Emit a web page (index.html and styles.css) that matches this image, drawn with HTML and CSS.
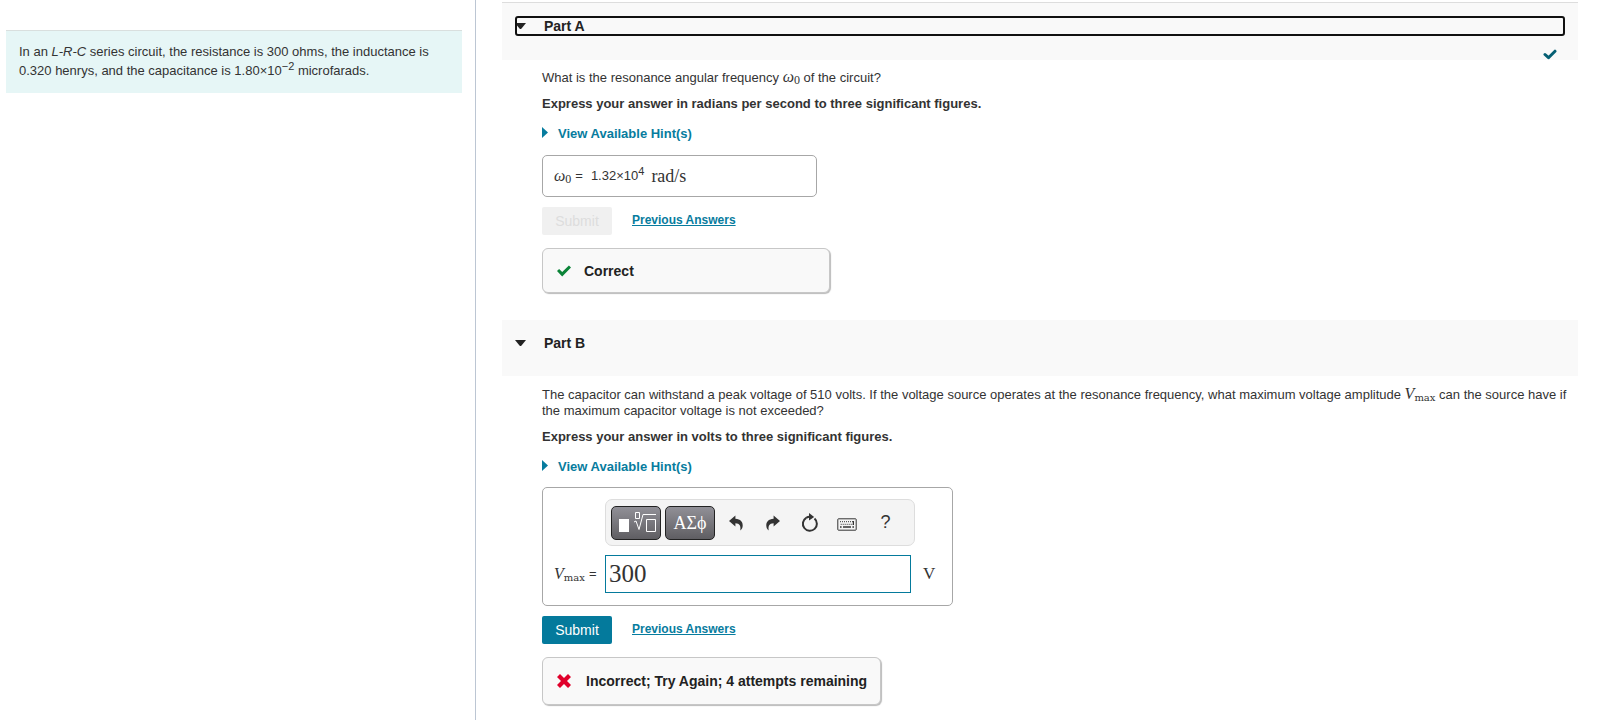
FILE: index.html
```html
<!DOCTYPE html>
<html lang="en">
<head>
<meta charset="utf-8">
<title>L-R-C series circuit</title>
<link rel="stylesheet" href="styles.css">
</head>
<body>
<div class="page">
  <aside class="intro">
    <p class="problem">In an <i>L-R-C</i> series circuit, the resistance is 300 ohms, the inductance is 0.320 henrys, and the capacitance is 1.80×10<sup>−2</sup> microfarads.</p>
  </aside>
  <main class="parts">
    <section class="part">
      <header class="part-header part-header-first">
        <h2><button class="part-toggle part-toggle-focused" type="button" aria-expanded="true">
          <svg class="caret" viewBox="0 0 11 6" aria-hidden="true"><path d="M0 0H11L6.5 5.4Q5.5 6.4 4.5 5.4Z"/></svg>Part A</button></h2>
        <svg class="done" viewBox="0 0 14 11" role="img" aria-label="Completed"><path d="M2 5.5L5.5 8.7L12 2.2"/></svg>
      </header>
      <div class="part-body">
        <p>What is the resonance angular frequency <span class="math"><i>ω</i><sub>0</sub></span> of the circuit?</p>
        <p class="instruction">Express your answer in radians per second to three significant figures.</p>
        <a class="hints" href="#hints-a"><svg viewBox="0 0 6 11" aria-hidden="true"><path d="M0 0L6 5.5L0 11Z"/></svg>View Available Hint(s)</a>
        <div class="answer"><span class="math"><i>ω</i><sub>0</sub></span><span>=</span><span class="value">1.32×10<sup>4</sup></span><span class="unit">rad/s</span></div>
        <div class="actions">
          <button class="submit" type="button" disabled>Submit</button>
          <a class="previous" href="#previous-a">Previous Answers</a>
        </div>
        <div class="feedback feedback-correct">
          <svg class="mark" viewBox="0 0 14 12" aria-hidden="true"><path d="M0 6.1L2.1 3.9L5.2 7L11.9 .5L14 2.6L5.2 11.4Z"/></svg>Correct
        </div>
      </div>
    </section>
    <section class="part">
      <header class="part-header">
        <h2><button class="part-toggle" type="button" aria-expanded="true">
          <svg class="caret" viewBox="0 0 11 6" aria-hidden="true"><path d="M0 0H11L6.5 5.4Q5.5 6.4 4.5 5.4Z"/></svg>Part B</button></h2>
      </header>
      <div class="part-body">
        <p>The capacitor can withstand a peak voltage of 510 volts. If the voltage source operates at the resonance frequency, what maximum voltage amplitude <span class="math"><i>V</i><sub class="word">max</sub></span> can the source have if the maximum capacitor voltage is not exceeded?</p>
        <p class="instruction">Express your answer in volts to three significant figures.</p>
        <a class="hints" href="#hints-b"><svg viewBox="0 0 6 11" aria-hidden="true"><path d="M0 0L6 5.5L0 11Z"/></svg>View Available Hint(s)</a>
        <div class="editor">
          <div class="toolbar" role="toolbar" aria-label="Equation tools">
            <button class="palette" type="button" aria-label="Templates">
              <svg viewBox="0 0 40 24" aria-hidden="true"><path class="solid" d="M3 8H13V21H3Z"/><path d="M19.5 1.5H23.5V7.5H19.5ZM18 11L20 10L23 18.5L27 3.5H40M30.5 8.5H39.5V20.5H30.5Z"/></svg>
            </button>
            <button class="palette" type="button">ΑΣϕ</button>
            <button class="tool" type="button" aria-label="Undo"><svg viewBox="0 0 14 16" aria-hidden="true"><path d="M0 6L6.4 .6V3.7C11.5 3.9 14 7 13.7 10.7C13.6 12.9 12.8 14.3 11.3 15.4C11.9 11.2 10.9 8.4 6.4 8.3V11.5Z"/></svg></button>
            <button class="tool" type="button" aria-label="Redo"><svg viewBox="0 0 14 16" aria-hidden="true"><path d="M14 6L7.6 .6V3.7C2.5 3.9 0 7 .3 10.7C.4 12.9 1.2 14.3 2.7 15.4C2.1 11.2 3.1 8.4 7.6 8.3V11.5Z"/></svg></button>
            <button class="tool" type="button" aria-label="Reset"><svg class="wide" viewBox="0 0 18 20" aria-hidden="true"><path class="ring" d="M5.2 4.8A7 7 0 1 0 13.5 5.5"/><path d="M8 0L13.2 4L8 7.6Z"/><path class="ring" d="M5.2 4.8Q7 3.6 9 3.7"/></svg></button>
            <button class="tool" type="button" aria-label="Keyboard"><svg class="keys" viewBox="0 0 20 13" aria-hidden="true"><path class="frame" d="M1.5 .8H18.5Q19.2 .8 19.2 1.5V11.5Q19.2 12.2 18.5 12.2H1.5Q.8 12.2 .8 11.5V1.5Q.8 .8 1.5 .8Z"/><path class="row" d="M3 3.7H17M3.7 6.3H17"/><path d="M3 8.2H4.6V9.8H3ZM6 8.2H14V9.8H6ZM15.4 8.2H17V9.8H15.4ZM15.8 3V7H17V3Z"/></svg></button>
            <button class="tool help" type="button" aria-label="Help">?</button>
          </div>
          <label class="editor-label" for="vmax"><span class="math"><i>V</i><sub class="word">max</sub></span><span>=</span></label>
          <input class="entry" id="vmax" type="text" value="300">
          <span class="editor-unit">V</span>
        </div>
        <div class="actions">
          <button class="submit" type="button">Submit</button>
          <a class="previous" href="#previous-b">Previous Answers</a>
        </div>
        <div class="feedback">
          <svg class="mark" viewBox="0 0 14 14" aria-hidden="true"><path d="M3 0L7 4L11 0L14 3L10 7L14 11L11 14L7 10L3 14L0 11L4 7L0 3Z"/></svg>Incorrect; Try Again; 4 attempts remaining
        </div>
      </div>
    </section>
  </main>
</div>
</body>
</html>
```
FILE: styles.css
```css
* { box-sizing: border-box; }

body {
  margin: 0;
  background: #fff;
  color: #333;
  font: 13px/16px "Liberation Sans", Arial, sans-serif;
}

button { font-family: inherit; cursor: pointer; }
p, h2 { margin: 0; }
sup, sub { line-height: 0; }
sup { font-size: 11px; vertical-align: 5px; }

.page {
  display: grid;
  grid-template-columns: 476px minmax(0, 1fr);
  min-height: 100vh;
}

.intro {
  padding: 30px 13px 0 6px;
  border-right: 1px solid #bcc6d3;
}

.problem {
  padding: 11px 13px 13px;
  border-top: 1px solid #d9dfde;
  background: #e6f6f6;
  line-height: 19px;
}

.parts {
  padding: 2px 22px 12px 26px;
}

.part + .part { margin-top: 27px; }

.part-header {
  height: 56px;
  padding: 13px 13px 0;
  background: #f9f9f9;
}

.part-header-first {
  height: 58px;
  border-top: 1px solid #ddd;
}

.part-toggle {
  display: flex;
  align-items: center;
  width: 100%;
  height: 20px;
  padding: 0;
  border: 0;
  border-radius: 3px;
  background: none;
  color: #222;
  font-size: 14px;
  font-weight: bold;
}

.part-toggle-focused { outline: 2px solid #111; outline-offset: -2px; }

.caret { width: 11px; height: 6px; margin: 0 18px 0 0; fill: #222; }

.done {
  display: block;
  width: 14px;
  height: 11px;
  margin: 13px 8px 0 auto;
  fill: none;
  stroke: #055f73;
  stroke-width: 3;
  stroke-linecap: round;
  stroke-linejoin: round;
}

.part-body {
  display: flex;
  flex-direction: column;
  align-items: flex-start;
  padding: 9px 0 0 40px;
}

.part + .part .part-body { padding-top: 10px; }

.math { font-family: "Liberation Serif", "Times New Roman", serif; font-size: 16px; }
.math sub { font-size: 12px; vertical-align: -2px; }
.math .word { font-family: "DejaVu Serif", serif; font-size: 10px; }

.instruction { margin-top: 10px; font-weight: bold; }

.hints {
  display: flex;
  align-items: baseline;
  gap: 10px;
  margin-top: 14px;
  color: #077c9e;
  font-weight: bold;
  text-decoration: none;
}

.hints svg { width: 6px; height: 11px; fill: currentColor; }

.answer {
  display: flex;
  align-items: center;
  gap: 4px;
  width: 275px;
  height: 42px;
  margin-top: 13px;
  padding: 0 11px;
  border: 1px solid #a7a7a7;
  border-radius: 5px;
}

.value { margin-left: 4px; }
.unit { margin-left: 3px; font: 18px/16px "Liberation Serif", serif; }

.actions {
  display: flex;
  align-items: center;
  gap: 20px;
  margin-top: 10px;
}

.submit {
  width: 70px;
  height: 28px;
  padding: 0;
  border: 0;
  border-radius: 2px;
  background: #047a9c;
  color: #fff;
  font-size: 14px;
}

.submit:disabled { background: #f0f0f0; color: #ddd; }

.previous {
  padding-bottom: 3px;
  color: #077c9e;
  font-size: 12px;
  font-weight: bold;
}

.feedback {
  display: flex;
  align-items: center;
  gap: 15px;
  height: 48px;
  margin-top: 13px;
  padding: 0 13px 0 14px;
  border: 1px solid #c7c7c7;
  border-radius: 6px;
  background: #f9f9f9;
  box-shadow: 1px 1px 1px #bbb;
  color: #222;
  font-size: 14px;
  font-weight: bold;
}

.feedback-correct { width: 288px; height: 45px; gap: 13px; }
.mark { width: 14px; height: 14px; fill: #e0002b; }
.feedback-correct .mark { height: 12px; fill: #0b8438; }

.editor {
  display: grid;
  grid-template-columns: 51px 306px auto;
  row-gap: 9px;
  align-items: center;
  width: 411px;
  margin-top: 12px;
  padding: 11px 12px 12px 11px;
  border: 1px solid #a7a7a7;
  border-radius: 5px;
}

.toolbar {
  grid-column: 2 / 4;
  display: flex;
  align-items: center;
  gap: 4px;
  width: 310px;
  height: 47px;
  padding: 0 5px;
  border: 1px solid #ddd;
  border-radius: 7px;
  background: #f4f4f4;
}

.palette {
  display: grid;
  place-items: center;
  width: 50px;
  height: 34px;
  padding: 0;
  border: 1px solid #222;
  border-radius: 5px;
  background: linear-gradient(#919097, #5f5e62);
  color: #fff;
  font: 18px/20px "Liberation Serif", serif;
}

.palette svg { width: 40px; height: 24px; fill: none; stroke: #fff; }
.palette .solid { fill: #fff; stroke: none; }

.tool {
  display: grid;
  place-items: center;
  width: 33px;
  height: 34px;
  padding: 0;
  border: 0;
  background: none;
  color: #333;
}

.tool svg { width: 14px; height: 16px; fill: #333; }
.tool .wide { width: 18px; height: 20px; }
.tool .keys { width: 20px; height: 13px; margin-top: 4px; }
.tool .ring { fill: none; stroke: #333; stroke-width: 2; }
.tool .frame { fill: none; stroke: #333; stroke-width: 1; }
.tool .row { fill: none; stroke: #333; stroke-width: 1; stroke-dasharray: 1 1; }
.tool.help { width: 37px; font-size: 18px; }

.editor-label { display: flex; align-items: center; gap: 4px; }

.entry {
  width: 100%;
  height: 38px;
  padding: 0 3px;
  border: 1px solid #047a9c;
  border-radius: 0;
  background: #fff;
  color: #333;
  font: 25px "Liberation Serif", serif;
}

.editor-unit { padding-left: 12px; font: 17px/20px "Liberation Serif", serif; }
```
